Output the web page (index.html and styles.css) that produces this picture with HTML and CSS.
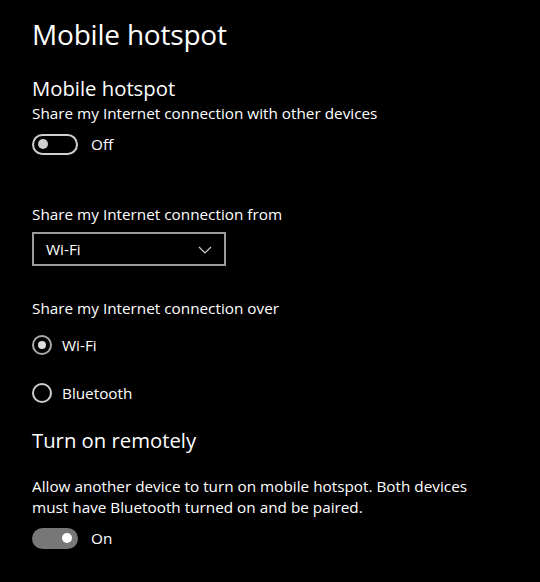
FILE: index.html
```html
<!DOCTYPE html>
<html>
<head>
<meta charset="utf-8">
<link rel="stylesheet" href="styles.css">
</head>
<body>
<main class="page">
  <h1 class="title">Mobile hotspot</h1>
  <h2 class="heading">Mobile hotspot</h2>
  <p class="text">Share my Internet connection with other devices</p>
  <div class="toggle-row">
    <span class="toggle off"><span class="knob"></span></span>
    <span class="toggle-label">Off</span>
  </div>

  <p class="text label-from">Share my Internet connection from</p>
  <div class="select">
    <span>Wi-Fi</span>
    <svg class="chev" width="14" height="8" viewBox="0 0 14 8"><path d="M1 1 L7 7 L13 1" fill="none" stroke="#d0d0d0" stroke-width="1.2"/></svg>
  </div>

  <p class="text label-over">Share my Internet connection over</p>
  <div class="radio-row first">
    <span class="radio checked"><span class="dot"></span></span>
    <span class="radio-label">Wi-Fi</span>
  </div>
  <div class="radio-row">
    <span class="radio"></span>
    <span class="radio-label">Bluetooth</span>
  </div>

  <h2 class="heading remote">Turn on remotely</h2>
  <p class="text para">Allow another device to turn on mobile hotspot. Both devices must have Bluetooth turned on and be paired.</p>
  <div class="toggle-row second">
    <span class="toggle on"><span class="knob"></span></span>
    <span class="toggle-label">On</span>
  </div>
</main>
</body>
</html>
```

FILE: styles.css
```css
html, body {
  margin: 0;
  padding: 0;
  background: #000;
}
body {
  width: 540px;
  height: 582px;
  overflow: hidden;
  color: #fff;
  font-family: "Open Sans", "Noto Sans", sans-serif;
}
.page {
  padding: 14px 0 0 32px;
}
.title {
  margin: 0;
  font-weight: 400;
  font-size: 28px;
  line-height: 40px;
  letter-spacing: -0.2px;
}
.heading {
  margin: 20px 0 0;
  font-weight: 400;
  font-size: 20.3px;
  line-height: 28px;
}
.text {
  margin: 0;
  font-size: 15.3px;
  line-height: 22px;
  color: #fff;
}
.toggle-row {
  display: flex;
  align-items: center;
  margin-top: 9px;
  height: 22px;
}
.toggle {
  width: 34px;
  height: 17px;
  border-radius: 11px;
  border: 2px solid #cfcfcf;
  display: flex;
  align-items: center;
  padding: 0 4px;
  box-sizing: content-box;
  flex: none;
}
.toggle .knob {
  width: 10px;
  height: 10px;
  border-radius: 50%;
  background: #cfcfcf;
}
.toggle.on {
  background: #777;
  border-color: #777;
  justify-content: flex-end;
}
.toggle.on .knob {
  background: #fff;
}
.toggle-label {
  margin-left: 13px;
  font-size: 15.3px;
}
.label-from {
  margin-top: 48px;
}
.select {
  margin-top: 7px;
  height: 30px;
  border: 2px solid #9a9a9a;
  display: flex;
  align-items: center;
  justify-content: space-between;
  padding: 0 12px 0 12px;
  box-sizing: content-box;
  width: 166px;
  font-size: 15.3px;
}
.chev { margin-top: 1px; }
.label-over {
  margin-top: 31px;
}
.radio-row {
  display: flex;
  align-items: center;
  margin-top: 28px;
  height: 20px;
}
.radio-row.first {
  margin-top: 16px;
}
.radio {
  width: 16px;
  height: 16px;
  border: 2px solid #cfcfcf;
  border-radius: 50%;
  display: flex;
  align-items: center;
  justify-content: center;
  flex: none;
}
.radio.checked {
  border-color: #aaa;
}
.radio .dot {
  width: 8px;
  height: 8px;
  border-radius: 50%;
  background: #ddd;
}
.radio-label {
  margin-left: 10px;
  font-size: 15.3px;
}
.heading.remote {
  margin-top: 23px;
}
.para {
  margin-top: 22px;
  width: 455px;
  line-height: 21px;
}
.toggle-row.second {
  margin-top: 9px;
}
```
